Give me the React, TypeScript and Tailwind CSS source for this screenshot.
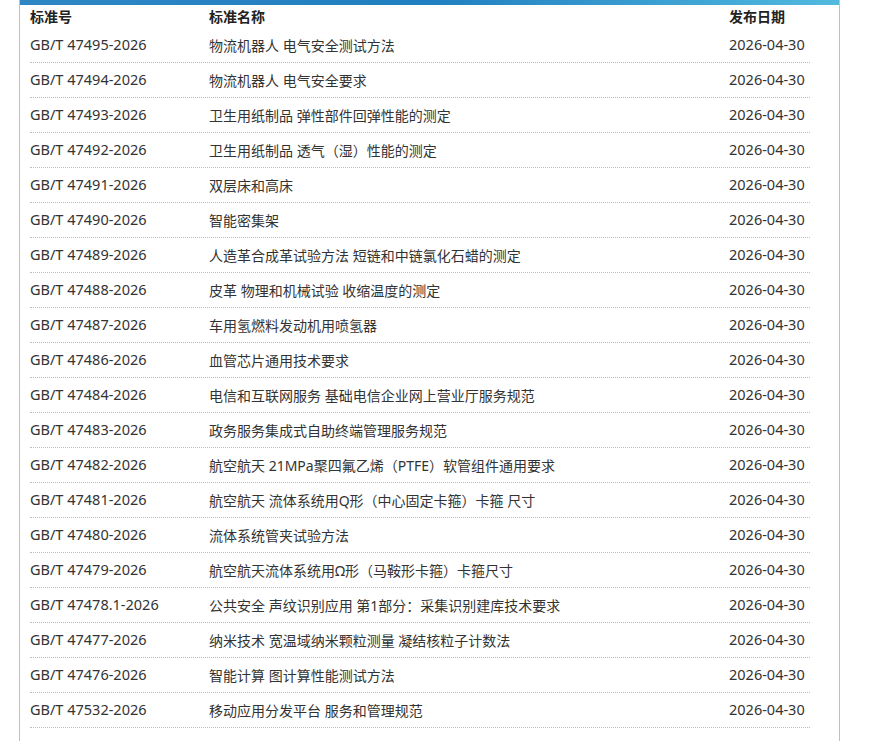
const rows: [string, string][] = [
["GB/T 47495-2026","物流机器人 电气安全测试方法"],
["GB/T 47494-2026","物流机器人 电气安全要求"],
["GB/T 47493-2026","卫生用纸制品 弹性部件回弹性能的测定"],
["GB/T 47492-2026","卫生用纸制品 透气（湿）性能的测定"],
["GB/T 47491-2026","双层床和高床"],
["GB/T 47490-2026","智能密集架"],
["GB/T 47489-2026","人造革合成革试验方法 短链和中链氯化石蜡的测定"],
["GB/T 47488-2026","皮革 物理和机械试验 收缩温度的测定"],
["GB/T 47487-2026","车用氢燃料发动机用喷氢器"],
["GB/T 47486-2026","血管芯片通用技术要求"],
["GB/T 47484-2026","电信和互联网服务 基础电信企业网上营业厅服务规范"],
["GB/T 47483-2026","政务服务集成式自助终端管理服务规范"],
["GB/T 47482-2026","航空航天 21MPa聚四氟乙烯（PTFE）软管组件通用要求"],
["GB/T 47481-2026","航空航天 流体系统用Q形（中心固定卡箍）卡箍 尺寸"],
["GB/T 47480-2026","流体系统管夹试验方法"],
["GB/T 47479-2026","航空航天流体系统用Ω形（马鞍形卡箍）卡箍尺寸"],
["GB/T 47478.1-2026","公共安全 声纹识别应用 第1部分：采集识别建库技术要求"],
["GB/T 47477-2026","纳米技术 宽温域纳米颗粒测量 凝结核粒子计数法"],
["GB/T 47476-2026","智能计算 图计算性能测试方法"],
["GB/T 47532-2026","移动应用分发平台 服务和管理规范"],
];
export default function App() {
  return (
    <div className="w-[873px] h-[741px] bg-white overflow-hidden" style={{fontFamily:'"Noto Sans","Noto Sans CJK SC",sans-serif'}}>
      <div className="ml-[19px] w-[821px] h-[741px] border-x border-[#a9c6dc]">
        <div className="h-[5px] bg-gradient-to-r from-[#2f86c4] via-[#1f7fc0] to-[#52b9df]" />
        <div className="pl-[10px] pr-[29px] text-[14.5px] text-[#333]">
          <div className="flex h-[23px] items-center font-bold text-[#222] text-[14px]">
            <div className="w-[179px]">标准号</div>
            <div className="flex-1">标准名称</div>
            <div className="w-[81px]">发布日期</div>
          </div>
          {rows.map(([a,b]) => (
            <div key={a} className="flex h-[35px] items-center border-b border-dotted border-[#a8c4d8]">
              <div className="w-[179px]">{a}</div>
              <div className="flex-1 text-[14px]">{b}</div>
              <div className="w-[81px] whitespace-nowrap">2026-04-30</div>
            </div>
          ))}
        </div>
      </div>
    </div>
  );
}
